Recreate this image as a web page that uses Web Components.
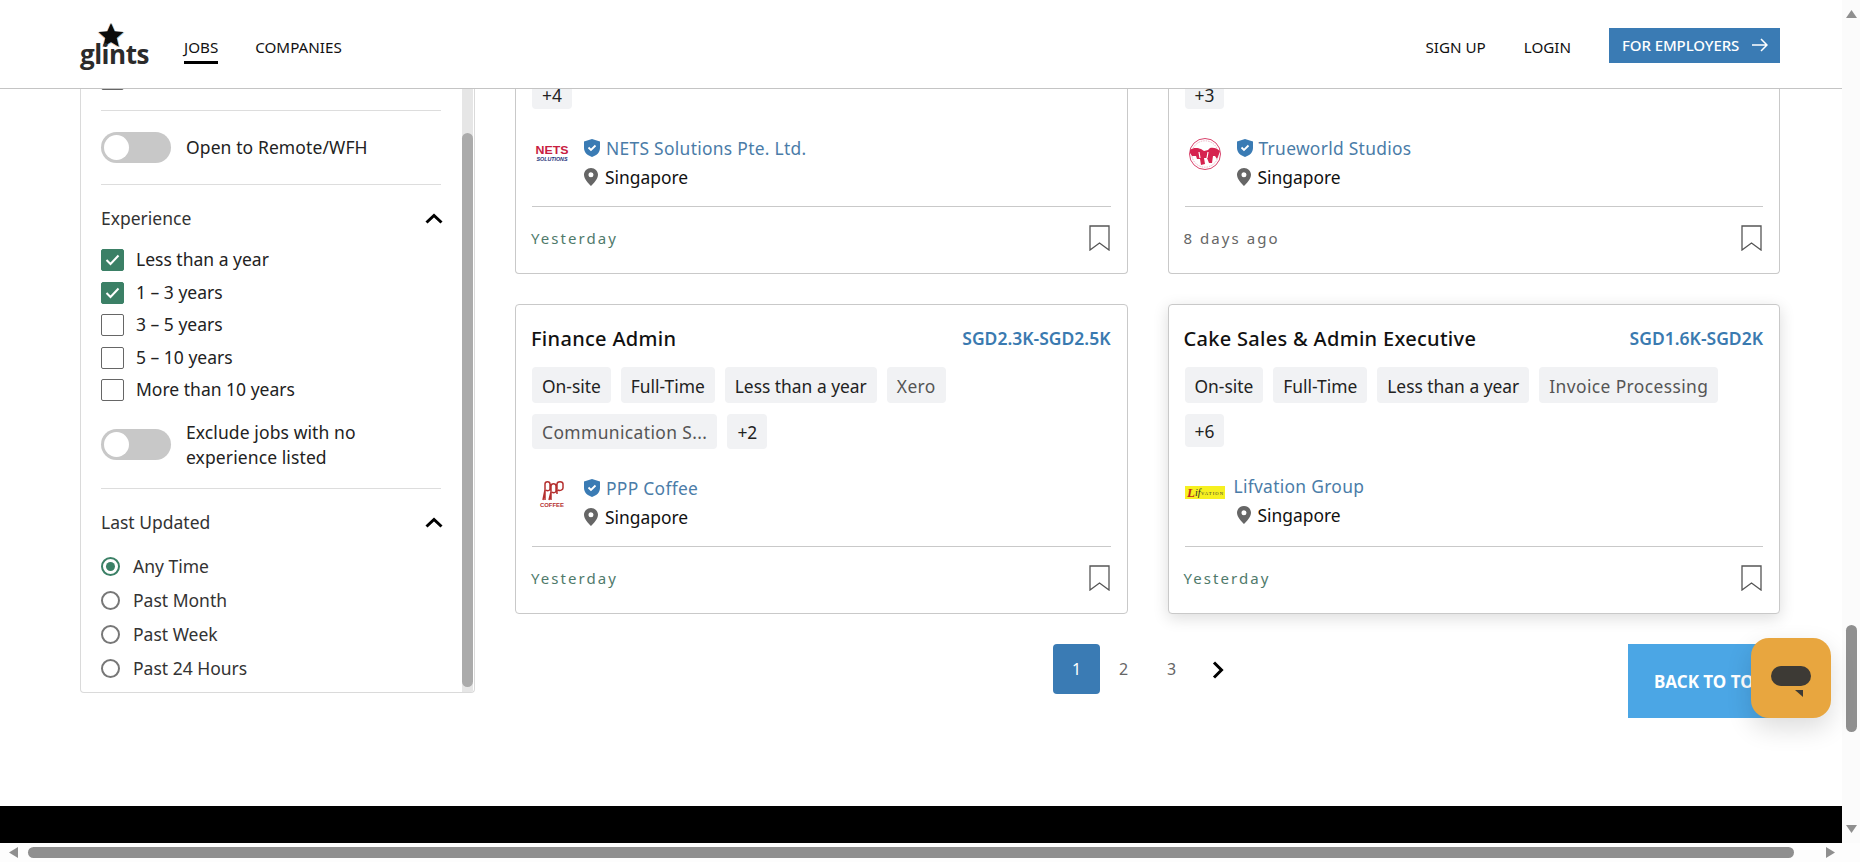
<!DOCTYPE html>
<html lang="en">
<head>
<meta charset="utf-8">
<title>Glints jobs</title>
<style>
  html, body { margin: 0; padding: 0; height: 100%; overflow: hidden; background: #fff; }
  body { font-family: "Noto Sans", "Open Sans", sans-serif; color: #222; }
  job-tag.r1 { height: 36px; padding-top: 1px; }
  job-tag.r2 { height: 35px; padding-top: 1px; }
  job-tag.r3 { height: 33px; }
  job-tag.r4 { height: 28px; line-height: 14px; }
</style>
</head>
<body>

<app-shell>
  <site-header slot="header"></site-header>

  <filter-panel slot="side">
    <filter-check slot="top"></filter-check>
    <filter-toggle label="Open to Remote/WFH" style="height:73px;border-bottom:1px solid #ddd"></filter-toggle>
    <filter-section heading="Experience" style="--head:62px;--top:2px">
      <div style="display:flex;flex-direction:column;gap:10.5px">
        <filter-check checked>Less than a year</filter-check>
        <filter-check checked>1 – 3 years</filter-check>
        <filter-check>3 – 5 years</filter-check>
        <filter-check>5 – 10 years</filter-check>
        <filter-check>More than 10 years</filter-check>
      </div>
      <filter-toggle label="Exclude jobs with no experience listed" style="margin:19px 0"></filter-toggle>
    </filter-section>
    <filter-section heading="Last Updated" style="--head:54px;--top:6px">
      <filter-radio checked>Any Time</filter-radio>
      <filter-radio>Past Month</filter-radio>
      <filter-radio>Past Week</filter-radio>
      <filter-radio>Past 24 Hours</filter-radio>
    </filter-section>
  </filter-panel>

  <job-card slot="cards" clipped company="NETS Solutions Pte. Ltd." verified posted="Yesterday" fresh>
    <job-tag class="r4">+4</job-tag>
    <svg slot="logo" width="36" height="20" viewBox="0 0 36 20">
      <text x="18" y="10" text-anchor="middle" font-family="Liberation Sans, sans-serif" font-size="11.5" font-weight="700" fill="#c8203f" textLength="33" lengthAdjust="spacingAndGlyphs">NETS</text>
      <text x="18" y="17" text-anchor="middle" font-family="Liberation Sans, sans-serif" font-size="5.5" font-weight="700" font-style="italic" fill="#1c2f78" textLength="31" lengthAdjust="spacingAndGlyphs">SOLUTIONS</text>
    </svg>
  </job-card>

  <job-card slot="cards" clipped company="Trueworld Studios" verified posted="8 days ago">
    <job-tag class="r4">+3</job-tag>
    <svg slot="logo" width="34" height="34" viewBox="0 0 34 34">
      <circle cx="17" cy="17" r="15.5" fill="none" stroke="#d8436c" stroke-width="1"/>
      <circle cx="17" cy="17" r="13.2" fill="none" stroke="#ecb3c3" stroke-width="1" stroke-dasharray="1.5 1"/>
      <path d="M2 13c4-3 8-2 11-1l3 2 4-1 2-2c3-1 7 0 10 3l-1 3-2 5-2-3-2 0-1 7-3 0-2-5-3 0 1 6-4 1-1-6-3 0-1-3-4 0-2-3z" fill="#d6234f"/>
      <path d="M11 15l1 6M20 15l-1 6" stroke="#fff" stroke-width="1.2" fill="none"/>
    </svg>
  </job-card>

  <job-card slot="cards" job-title="Finance Admin" salary="SGD2.3K-SGD2.5K" company="PPP Coffee" verified posted="Yesterday" fresh>
    <job-tag class="r1">On-site</job-tag>
    <job-tag class="r1">Full-Time</job-tag>
    <job-tag class="r1">Less than a year</job-tag>
    <job-tag class="r1" skill>Xero</job-tag>
    <job-tag class="r2" skill>Communication S...</job-tag>
    <job-tag class="r2">+2</job-tag>
    <svg slot="logo" width="26" height="28" viewBox="0 0 26 28">
      <path d="M6 20V4c0-3 5-3 5 0v5c0 2-3 2-4 1M12 20V6c0-3 5-3 5 0v5c0 2-3 2-4 1M18 14V4c0-3 6-3 6 0v4c0 2-3 3-5 2M4 20l2-10M10 20l2-8" fill="none" stroke="#b5302f" stroke-width="1.5"/>
      <text x="13" y="27" text-anchor="middle" font-family="Liberation Sans, sans-serif" font-size="5.5" font-weight="700" fill="#b5302f" textLength="24" lengthAdjust="spacingAndGlyphs">COFFEE</text>
    </svg>
  </job-card>

  <job-card slot="cards" raised job-title="Cake Sales &amp; Admin Executive" salary="SGD1.6K-SGD2K" company="Lifvation Group" posted="Yesterday" fresh style="--logo-gap:9px;--pin-indent:3px">
    <job-tag class="r1">On-site</job-tag>
    <job-tag class="r1">Full-Time</job-tag>
    <job-tag class="r1">Less than a year</job-tag>
    <job-tag class="r1" skill>Invoice Processing</job-tag>
    <job-tag class="r3">+6</job-tag>
    <svg slot="logo" width="40" height="13" viewBox="0 0 40 13">
      <rect width="40" height="13" fill="#f6f020"/>
      <text x="2" y="11" font-family="Liberation Serif, serif" font-size="13" font-weight="700" font-style="italic" fill="#c2281c">L</text>
      <text x="10" y="10" font-family="Liberation Serif, serif" font-size="10" font-style="italic" fill="#2a2a2a">if</text>
      <text x="16" y="9" font-family="Liberation Serif, serif" font-size="4.6" fill="#333" textLength="22">VATION</text>
    </svg>
  </job-card>

  <job-pagination slot="pager"></job-pagination>
</app-shell>

<script>
  class AppShell extends HTMLElement {
    constructor() {
      super();
      this.attachShadow({ mode: "open" });
      this.shadowRoot.innerHTML = `
        <style>
          :host {
            display: grid;
            grid-template-columns: 1842px 18px;
            grid-template-rows: 843px 19px;
            width: 1860px;
            height: 862px;
            position: relative;
            overflow: hidden;
          }
          .page { display: flex; flex-direction: column; min-width: 0; }
          .body {
            height: 717px;
            padding: 0 62px 0 80px;
            display: flex;
            align-items: flex-start;
            gap: 40px;
            overflow: hidden;
            box-sizing: border-box;
          }
          .results { width: 1265px; }
          .grid {
            display: grid;
            grid-template-columns: 1fr 1fr;
            grid-template-rows: 185px 310px;
            gap: 30px 40px;
            margin-bottom: 30px;
          }
          .black { height: 37px; background: #000; }
          h-scroll { grid-column: 1 / 3; }
          chat-button { position: absolute; left: 1751px; top: 638px; }
        </style>
        <div class="page">
          <slot name="header"></slot>
          <div class="body">
            <slot name="side"></slot>
            <div class="results">
              <div class="grid"><slot name="cards"></slot></div>
              <slot name="pager"></slot>
            </div>
          </div>
          <div class="black"></div>
        </div>
        <v-scroll></v-scroll>
        <h-scroll></h-scroll>
        <chat-button></chat-button>
      `;
    }
  }

  class SiteHeader extends HTMLElement {
    constructor() {
      super();
      this.attachShadow({ mode: "open" });
      this.shadowRoot.innerHTML = `
        <style>
          :host {
            display: flex;
            align-items: center;
            height: 89px;
            box-sizing: border-box;
            padding: 6px 62px 0 80px;
            border-bottom: 1px solid #c4c4c4;
            background: #fff;
            font-size: 15.2px;
            color: #111;
          }
          .logo { width: 67px; margin-right: 37px; position: relative; height: 50px; flex: none; }
          .logo svg { position: absolute; left: 17px; top: 0; filter: blur(.3px); }
          .logo span {
            position: absolute; left: 0; top: 15px;
            font: 700 26px/34px "Open Sans", sans-serif;
            letter-spacing: -0.5px;
            color: #2b2b2b;
          }
          nav { display: flex; gap: 37px; }
          a { color: inherit; text-decoration: none; position: relative; display: block; }
          a.on::after { content: ""; position: absolute; left: 0; right: 0; top: 24px; height: 3px; background: #000; }
          .right { margin-left: auto; display: flex; align-items: center; gap: 38px; }
          .cta {
            display: flex; align-items: center; gap: 13px;
            width: 171px; height: 35px; box-sizing: border-box; padding-left: 13px;
            margin-top: -4px;
            background: #3a7bb4; color: #fff; font-size: 15px; font-weight: 500; letter-spacing: -0.1px;
          }
        </style>
        <div class="logo">
          <svg width="29" height="28" viewBox="0 0 29 28">
            <path d="M14 1l3.600 8.300 8.900.8-6.800 5.900 2.100 8.700-7.800-4.600-7.800 4.600 2.100-8.700L1.500 10l8.900-.8z" fill="#f0954a" transform="translate(-1 .5)" opacity=".6"/>
            <path d="M14 1l3.600 8.300 8.900.8-6.800 5.900 2.100 8.700-7.800-4.600-7.800 4.600 2.100-8.700L1.500 10l8.900-.8z" fill="#3a9ad9" transform="translate(1 .5)" opacity=".6"/>
            <path d="M14 1l3.600 8.300 8.900.8-6.800 5.900 2.100 8.700-7.800-4.600-7.800 4.600 2.100-8.700L1.500 10l8.900-.8z" fill="#0b0b0b"/>
          </svg>
          <span>glints</span>
        </div>
        <nav><a class="on" href="#">JOBS</a><a href="#">COMPANIES</a></nav>
        <div class="right">
          <a href="#">SIGN UP</a>
          <a href="#">LOGIN</a>
          <a class="cta" href="#">FOR EMPLOYERS
            <svg width="16" height="14" viewBox="0 0 16 14" fill="none" stroke="#fff" stroke-width="1.5"><path d="M0 7h15M9 1l6 6-6 6"/></svg>
          </a>
        </div>
      `;
    }
  }

  class FilterPanel extends HTMLElement {
    constructor() {
      super();
      this.attachShadow({ mode: "open" });
      this.shadowRoot.innerHTML = `
        <style>
          :host {
            display: flex;
            width: 395px;
            height: 604px;
            flex: none;
            box-sizing: border-box;
            border: 1px solid #dadada;
            border-top: none;
            border-radius: 0 0 4px 4px;
            font-size: 17.5px;
            color: #222;
            overflow: hidden;
          }
          .content { flex: 1; min-width: 0; padding: 0 21px 0 20px; }
          .clip { height: 21px; overflow: hidden; border-bottom: 1px solid #ddd; }
          .clip ::slotted(filter-check) { margin-top: -21px; }
          .bar { width: 11px; margin-right: 1px; background: #e6e6e6; display: flex; flex-direction: column; }
          .thumb { margin-top: 44px; height: 554px; background: #ababab; border-radius: 6px; }
        </style>
        <div class="content">
          <div class="clip"><slot name="top"></slot></div>
          <slot></slot>
        </div>
        <div class="bar"><div class="thumb"></div></div>
      `;
    }
  }

  class FilterSection extends HTMLElement {
    constructor() {
      super();
      this.attachShadow({ mode: "open" });
      this.shadowRoot.innerHTML = `
        <style>
          :host { display: block; }
          :host(:not(:last-child)) { border-bottom: 1px solid #ddd; }
          .head {
            display: flex; align-items: center; justify-content: space-between;
            height: var(--head, 62px);
            padding-top: var(--top, 0);
            color: #333;
          }
          svg { margin-right: -2px; }
        </style>
        <div class="head">
          <span class="title"></span>
          <svg width="18" height="11" viewBox="0 0 18 11" fill="none" stroke="#000" stroke-width="3"><path d="M1.5 9.5L9 2.5l7.5 7"/></svg>
        </div>
        <slot></slot>
      `;
      this.shadowRoot.querySelector(".title").textContent = this.getAttribute("heading");
    }
  }

  class FilterCheck extends HTMLElement {
    constructor() {
      super();
      this.attachShadow({ mode: "open" });
      this.shadowRoot.innerHTML = `
        <style>
          :host { display: flex; align-items: center; gap: 12px; height: 22px; color: #222; }
          .box {
            width: 23px; height: 22px; box-sizing: border-box; flex: none;
            border: 1px solid #666; border-radius: 2px; display: flex; align-items: center; justify-content: center;
          }
          :host([checked]) .box { background: #3b8066; border-color: #3b8066; }
          svg { display: none; }
          :host([checked]) svg { display: block; }
          span { margin-top: -2px; }
        </style>
        <div class="box">
          <svg width="15" height="12" viewBox="0 0 15 12" fill="none" stroke="#fff" stroke-width="2"><path d="M1.5 6l4 4 8-8.5"/></svg>
        </div>
        <span><slot></slot></span>
      `;
    }
  }

  class FilterRadio extends HTMLElement {
    constructor() {
      super();
      this.attachShadow({ mode: "open" });
      this.shadowRoot.innerHTML = `
        <style>
          :host { display: flex; align-items: center; gap: 13px; height: 34px; color: #333; }
          .dot {
            width: 19px; height: 19px; box-sizing: border-box; flex: none;
            border: 2px solid #777; border-radius: 50%; display: flex; align-items: center; justify-content: center;
          }
          :host([checked]) .dot { border-color: #3b8066; }
          :host([checked]) .dot::after { content: ""; width: 9px; height: 9px; border-radius: 50%; background: #3b8066; }
        </style>
        <div class="dot"></div>
        <slot></slot>
      `;
    }
  }

  class FilterToggle extends HTMLElement {
    constructor() {
      super();
      this.attachShadow({ mode: "open" });
      this.shadowRoot.innerHTML = `
        <style>
          :host { display: flex; align-items: center; gap: 15px; color: #222; line-height: 24.5px; }
          .track {
            width: 70px; height: 31px; background: #c8c8c8; border-radius: 16px; flex: none;
            display: flex; align-items: center; padding-left: 3px; box-sizing: border-box;
          }
          .knob { width: 25px; height: 25px; background: #fff; border-radius: 50%; }
          .label { max-width: 222px; letter-spacing: .1px; }
        </style>
        <div class="track"><div class="knob"></div></div>
        <div class="label"></div>
      `;
      this.shadowRoot.querySelector(".label").textContent = this.getAttribute("label");
    }
  }

  class JobTag extends HTMLElement {
    constructor() {
      super();
      this.attachShadow({ mode: "open" });
      this.shadowRoot.innerHTML = `
        <style>
          :host {
            display: flex; align-items: center;
            box-sizing: border-box;
            padding: 0 10px;
            background: #f1f2f4;
            border-radius: 4px;
            font-size: 17.4px;
            color: #222;
            white-space: nowrap;
          }
          :host([skill]) { color: #555; letter-spacing: .4px; }
        </style>
        <slot></slot>
      `;
    }
  }

  class JobCard extends HTMLElement {
    constructor() {
      super();
      this.attachShadow({ mode: "open" });
      this.shadowRoot.innerHTML = `
        <style>
          :host {
            display: flex; flex-direction: column;
            box-sizing: border-box;
            padding: 21px 16px 0;
            background: #fff;
            border: 1px solid #c9c9c9;
            border-radius: 4px;
            overflow: hidden;
            min-height: 0;
          }
          :host([clipped]) {
            border-top: none;
            border-radius: 0 0 4px 4px;
            padding-top: 0;
            justify-content: flex-end;
          }
          :host([clipped]) .head { display: none; }
          :host([raised]) { box-shadow: 0 4px 16px rgba(0,0,0,.14); overflow: visible; }
          .head { display: flex; justify-content: space-between; align-items: center; height: 24px; margin-bottom: 17px; flex: none; }
          .title { font-size: 20px; font-weight: 500; color: #111; letter-spacing: .3px; margin-left: -1px; }
          .salary { font-size: 17.5px; font-weight: 600; color: #3a7ab0; }
          .tags { display: flex; flex-wrap: wrap; gap: 11px 10px; flex: none; }
          .company { display: flex; align-items: flex-start; gap: var(--logo-gap, 12px); margin: 27px 0 17px; flex: none; font-size: 17.4px; }
          .logo { width: 40px; height: 36px; display: flex; align-items: center; justify-content: center; flex: none; }
          .name { display: flex; align-items: center; gap: 6px; height: 24px; margin-bottom: 5px; color: #4a7ca8; letter-spacing: .3px; }
          .place { display: flex; align-items: center; gap: 7px; height: 24px; color: #111; padding-left: var(--pin-indent, 0); }
          .foot {
            display: flex; align-items: center; justify-content: space-between;
            height: 67px; box-sizing: border-box; padding-bottom: 4px; flex: none; margin-top: auto;
            border-top: 1px solid #c9c9c9;
            font-size: 15px; letter-spacing: 2.05px; color: #666;
          }
          :host([fresh]) .foot { color: #4f7a6b; }
          .posted { margin-left: -1px; }
          .shield { display: none; }
          :host([verified]) .shield { display: block; }
          .foot svg { margin-right: 1px; }
        </style>
        <div class="head"><span class="title"></span><span class="salary"></span></div>
        <div class="tags"><slot></slot></div>
        <div class="company">
          <div class="logo"><slot name="logo"></slot></div>
          <div>
            <div class="name">
              <svg class="shield" width="16" height="18" viewBox="0 0 16 18">
                <path d="M8 0l8 2.500V9c0 4.500-3.500 7.500-8 9-4.500-1.500-8-4.500-8-9V2.500z" fill="#3a7bb4"/>
                <path d="M4.500 8.500l2.500 2.500 4.500-4.500" fill="none" stroke="#fff" stroke-width="1.800"/>
              </svg>
              <span class="company-name"></span>
            </div>
            <div class="place">
              <svg width="14" height="18" viewBox="0 0 14 18">
                <path fill-rule="evenodd" d="M7 0c3.900 0 7 3 7 6.800C14 11 9.500 15.500 7 18 4.500 15.500 0 11 0 6.800 0 3 3.100 0 7 0zm0 4.300a2.500 2.500 0 100 5 2.500 2.500 0 000-5z" fill="#666"/>
              </svg>
              <span>Singapore</span>
            </div>
          </div>
        </div>
        <div class="foot">
          <span class="posted"></span>
          <svg width="21" height="26" viewBox="0 0 21 26" fill="none" stroke="#555" stroke-width="1.300"><path d="M1 1h19v24l-9.500-7L1 25z"/></svg>
        </div>
      `;
      const root = this.shadowRoot;
      root.querySelector(".title").textContent = this.getAttribute("job-title") || "";
      root.querySelector(".salary").textContent = this.getAttribute("salary") || "";
      root.querySelector(".company-name").textContent = this.getAttribute("company") || "";
      root.querySelector(".posted").textContent = this.getAttribute("posted") || "";
    }
  }

  class JobPagination extends HTMLElement {
    constructor() {
      super();
      this.attachShadow({ mode: "open" });
      this.shadowRoot.innerHTML = `
        <style>
          :host { display: flex; justify-content: center; gap: 1px; position: relative; height: 50px; font-size: 16px; color: #666; }
          span { width: 47px; height: 50px; display: flex; align-items: center; justify-content: center; border-radius: 4px; }
          .on { background: #3a7bb4; color: #fff; margin: 0 -1px 0 1px; }
          svg { margin: 2px 4px 0 0; }
          .top {
            position: absolute; left: 1113px; top: 0;
            width: 173px; height: 74px; box-sizing: border-box; padding-left: 26px;
            display: flex; align-items: center;
            background: #4ba6e5; color: #fff; font-size: 17px; font-weight: 700; white-space: nowrap; overflow: hidden;
          }
        </style>
        <span class="on">1</span>
        <span>2</span>
        <span>3</span>
        <span><svg width="12" height="18" viewBox="0 0 12 18" fill="none" stroke="#000" stroke-width="3"><path d="M2 1.500L9.500 9 2 16.500"/></svg></span>
        <div class="top">BACK TO TOP</div>
      `;
    }
  }

  class ChatButton extends HTMLElement {
    constructor() {
      super();
      this.attachShadow({ mode: "open" });
      this.shadowRoot.innerHTML = `
        <style>
          :host {
            display: flex; align-items: center; justify-content: center;
            width: 80px; height: 80px;
            background: #e8a63f;
            border-radius: 18px;
            box-shadow: 0 10px 26px rgba(0,0,0,.14);
          }
          svg { margin-top: 6px; }
        </style>
        <svg width="42" height="34" viewBox="0 0 42 34">
          <rect x="1" y="2" width="40" height="20" rx="10" fill="#3d3a35"/>
          <path d="M25 26h8v7z" fill="#3d3a35"/>
        </svg>
      `;
    }
  }

  class VScroll extends HTMLElement {
    constructor() {
      super();
      this.attachShadow({ mode: "open" });
      this.shadowRoot.innerHTML = `
        <style>
          :host { display: flex; flex-direction: column; align-items: center; background: #fbfbfb; padding-top: 10px; box-sizing: border-box; height: 843px; }
          svg { display: block; flex: none; }
          .thumb { width: 11px; height: 107px; margin-top: 607px; background: #8f8f8f; border-radius: 6px; flex: none; }
          .down { margin-top: 93px; }
        </style>
        <svg width="11" height="8" viewBox="0 0 11 8"><path d="M5.500 0L11 8H0z" fill="#8f8f8f"/></svg>
        <div class="thumb"></div>
        <svg class="down" width="11" height="8" viewBox="0 0 11 8"><path d="M0 0h11L5.500 8z" fill="#8f8f8f"/></svg>
      `;
    }
  }

  class HScroll extends HTMLElement {
    constructor() {
      super();
      this.attachShadow({ mode: "open" });
      this.shadowRoot.innerHTML = `
        <style>
          :host { display: flex; align-items: flex-start; background: #fdfdfd; padding: 4px 0 0 9px; box-sizing: border-box; }
          .thumb { width: 1766px; height: 11px; margin: 0 32px 0 10px; background: #8f8f8f; border-radius: 6px; flex: none; }
          svg { flex: none; }
        </style>
        <svg width="9" height="11" viewBox="0 0 9 11"><path d="M9 0v11L0 5.500z" fill="#8f8f8f"/></svg>
        <div class="thumb"></div>
        <svg width="9" height="11" viewBox="0 0 9 11"><path d="M0 0v11l9-5.500z" fill="#8f8f8f"/></svg>
      `;
    }
  }

  customElements.define("app-shell", AppShell);
  customElements.define("site-header", SiteHeader);
  customElements.define("filter-panel", FilterPanel);
  customElements.define("filter-section", FilterSection);
  customElements.define("filter-check", FilterCheck);
  customElements.define("filter-radio", FilterRadio);
  customElements.define("filter-toggle", FilterToggle);
  customElements.define("job-tag", JobTag);
  customElements.define("job-card", JobCard);
  customElements.define("job-pagination", JobPagination);
  customElements.define("chat-button", ChatButton);
  customElements.define("v-scroll", VScroll);
  customElements.define("h-scroll", HScroll);
</script>
</body>
</html>
